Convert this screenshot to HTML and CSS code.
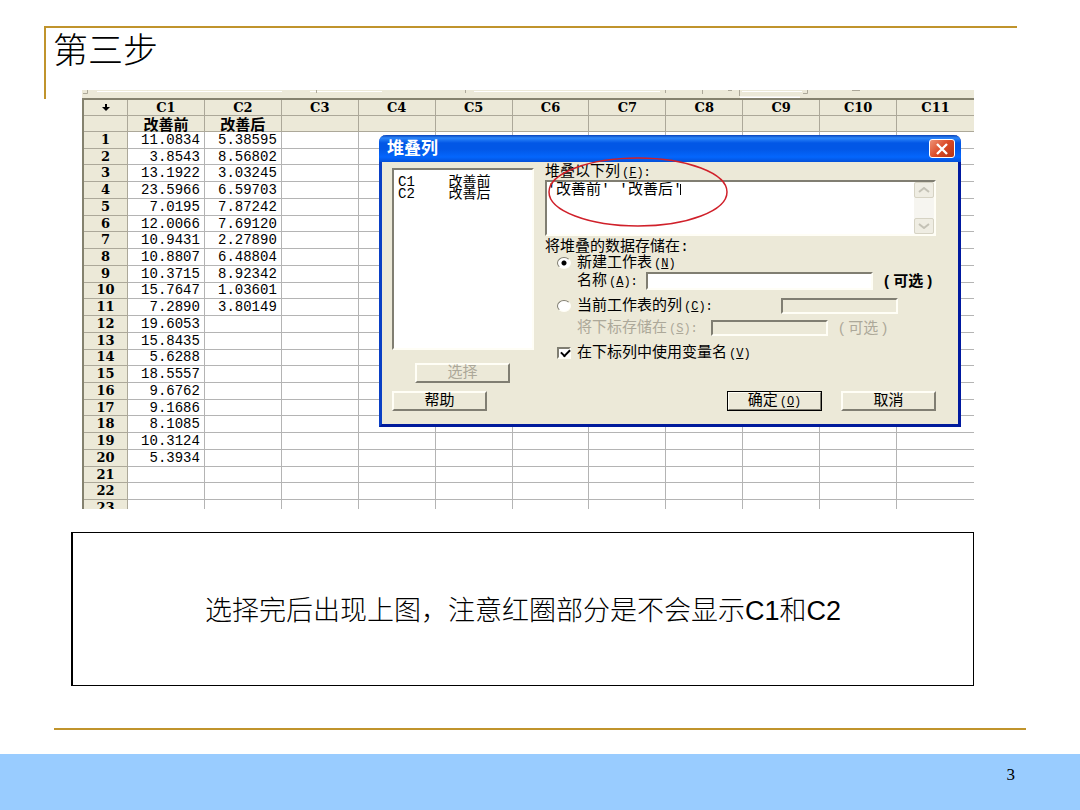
FILE: index.html
```html
<!DOCTYPE html>
<html lang="zh-CN">
<head>
  <meta charset="UTF-8" />
  <meta name="viewport" content="width=device-width, initial-scale=1.0" />
  <title>第三步</title>
  <link rel="stylesheet" href="styles.css">
</head>
<body>
  <div class="slide">
    <header class="slide-header">
      <h1>第三步</h1>
    </header>

    <main class="content">
      <section class="worksheet">
        <svg class="toolbar" viewBox="0 0 892 8" preserveAspectRatio="none" aria-hidden="true">
          <path d="M15 1.5H200M228 1.5H300M392 1.5H578M660 1.5H720" stroke="#fff" />
          <path d="M718 6.5H658V8H718Z" fill="#fff" />
          <path d="M5.500 0V3.500H1M234.500 0V3M383.500 0V3M583.500 0V3M620.500 0V4M657.500 0V6M725.500 0V3.500H721M646 .5h4M770 .5h8" fill="none" stroke="#aca899" />
        </svg>
        <table class="sheet">
          <thead>
            <tr><th class="gutter"><svg width="8" height="8" viewBox="0 0 8 8"><path d="M3 0h2v3h3L4 7 0 3h3z" /></svg></th><th>C1</th><th>C2</th><th>C3</th><th>C4</th><th>C5</th><th>C6</th><th>C7</th><th>C8</th><th>C9</th><th>C10</th><th>C11</th></tr>
            <tr class="names"><th></th><th>改善前</th><th>改善后</th><th></th><th></th><th></th><th></th><th></th><th></th><th></th><th></th><th></th></tr>
          </thead>
          <tbody id="rows"></tbody>
        </table>

        <form class="dialog">
          <div class="title-bar">
            <h2>堆叠列</h2>
            <button type="button" class="close" aria-label="关闭">
              <svg width="14" height="12" viewBox="0 0 14 12"><path d="M2 1L12 11M12 1L2 11" stroke="#fff" stroke-width="2.400" /></svg>
            </button>
          </div>
          <div class="dialog-body">
            <div class="source">
              <select class="inset list" size="12" aria-label="列">
                <option>C1&nbsp;&nbsp;&nbsp;&nbsp;改善前</option>
                <option>C2&nbsp;&nbsp;&nbsp;&nbsp;改善后</option>
              </select>
              <button type="button" class="btn select-btn" disabled>选择</button>
            </div>
            <div class="options">
              <label for="columns">堆叠以下列<kbd>(<u>F</u>):</kbd></label>
              <div class="inset columns">
                <textarea id="columns">'改善前' '改善后'</textarea>
                <span class="caret"></span>
                <div class="scrollbar">
                  <button type="button" aria-label="向上"><svg width="12" height="6" viewBox="0 0 12 6"><path d="M1 5L6 1L11 5" /></svg></button>
                  <button type="button" aria-label="向下"><svg width="12" height="6" viewBox="0 0 12 6"><path d="M1 1L6 5L11 1" /></svg></button>
                </div>
              </div>
              <p class="group">将堆叠的数据存储在:</p>
              <div class="row">
                <input type="radio" name="target" id="newSheet" checked>
                <label for="newSheet">新建工作表<kbd>(<u>N</u>)</kbd></label>
              </div>
              <div class="row sub name-row">
                <label for="sheetName">名称<kbd>(<u>A</u>):</kbd></label>
                <input type="text" class="inset" id="sheetName">
                <span class="hint">( 可选 )</span>
              </div>
              <div class="row column-row">
                <input type="radio" name="target" id="currentSheet">
                <label for="currentSheet">当前工作表的列<kbd>(<u>C</u>):</kbd></label>
                <input type="text" class="inset short" aria-label="当前工作表的列" disabled>
              </div>
              <div class="row sub subscript-row">
                <label for="subscripts">将下标存储在<kbd>(<u>S</u>):</kbd></label>
                <input type="text" class="inset short" id="subscripts" disabled>
                <span class="hint">( 可选 )</span>
              </div>
              <div class="row check-row">
                <input type="checkbox" id="useNames" checked>
                <label for="useNames">在下标列中使用变量名<kbd>(<u>V</u>)</kbd></label>
              </div>
            </div>
          </div>
          <div class="actions">
            <button type="button" class="btn help">帮助</button>
            <button type="button" class="btn default">确定<kbd>(<u>O</u>)</kbd></button>
            <button type="button" class="btn">取消</button>
          </div>
          <svg class="circle" width="182" height="74" viewBox="0 0 182 74" aria-hidden="true">
            <ellipse cx="91" cy="36" rx="89" ry="34" fill="none" stroke="#d0202a" stroke-width="1.500" />
          </svg>
        </form>
      </section>

      <p class="caption">选择完后出现上图，注意红圈部分是不会显示C1和C2</p>
    </main>

    <hr class="rule">
    <footer class="slide-footer">3</footer>
  </div>

  <script>
    const c1 = ["11.0834", "3.8543", "13.1922", "23.5966", "7.0195", "12.0066", "10.9431", "10.8807", "10.3715", "15.7647",
      "7.2890", "19.6053", "15.8435", "5.6288", "18.5557", "9.6762", "9.1686", "8.1085", "10.3124", "5.3934"];
    const c2 = ["5.38595", "8.56802", "3.03245", "6.59703", "7.87242", "7.69120", "2.27890", "6.48804", "8.92342", "1.03601", "3.80149"];
    const rows = document.getElementById("rows");

    for (let i = 0; i < 23; i++) {
      const tr = document.createElement("tr");
      tr.innerHTML = `<th>${i + 1}</th><td>${c1[i] || ""}</td><td>${c2[i] || ""}</td>` + "<td></td>".repeat(9);
      rows.appendChild(tr);
    }
  </script>
</body>
</html>
```

FILE: styles.css
```css
* {
  box-sizing: border-box;
  margin: 0;
  padding: 0;
}
body {
  background: #fff;
  color: #000;
  font-family: "Liberation Sans", "Noto Sans CJK SC", sans-serif;
}
.slide {
  display: flex;
  flex-direction: column;
  min-height: 100vh;
  padding-top: 26px;
}
.slide-header {
  height: 73px;
  margin: 0 63px 0 44px;
  padding-left: 7px;
  border: solid #c0942c;
  border-width: 2px 0 0 2px;
}
.slide-header h1 {
  font-size: 35px;
  font-weight: 300;
  line-height: 46px;
}
.content {
  margin: -9px 106px 0 71px;
}

/* worksheet */
.worksheet {
  position: relative;
  height: 419px;
  margin-left: 11px;
  overflow: hidden;
}
.toolbar {
  display: block;
  width: 100%;
  height: 8px;
  background: #ece9d8;
}
.sheet {
  width: 100%;
  height: 419px;
  table-layout: fixed;
  border-collapse: separate;
  border-spacing: 0;
  border-top: 2px solid #85826f;
  border-left: 2px solid #85826f;
}
.sheet th,
.sheet td {
  border-right: 1px solid #b4b4b4;
  border-bottom: 1px solid #b4b4b4;
  line-height: 12px;
}
.sheet th {
  background: #ece9d8;
  border-color: #aca899;
  font-family: "DejaVu Serif", "Noto Sans CJK SC", serif;
  font-size: 13px;
  font-weight: bold;
}
.sheet thead th {
  height: 16px;
}
.sheet .gutter {
  width: 44px;
}
.sheet .names th {
  padding-top: 2px;
  font-size: 15px;
}
.sheet td {
  padding-right: 4px;
  font-family: "Liberation Mono", monospace;
  font-size: 14px;
  text-align: right;
}
.sheet th:last-child,
.sheet td:last-child {
  border-right: none;
}

/* dialog */
.dialog {
  position: absolute;
  top: 45px;
  left: 297px;
  width: 582px;
  background: #ece9d8;
  border: 3px solid #0a3fc4;
  border-top: none;
  border-right-color: #0019a0;
  border-bottom-color: #001b9c;
  border-radius: 7px 7px 0 0;
  font-family: "Liberation Mono", "Noto Sans CJK SC", monospace;
  font-size: 15px;
  line-height: 14px;
}
.title-bar {
  display: flex;
  justify-content: space-between;
  align-items: center;
  height: 27px;
  margin: 0 -3px;
  padding: 0 6px 0 8px;
  background: linear-gradient(#0842b8, #2c86fa 3px, #0257e6 8px, #0257e6 14px, #0466fd 22px, #0450d8);
  border-radius: 7px 7px 0 0;
}
.title-bar h2 {
  padding-top: 2px;
  color: #fff;
  font-size: 17px;
  font-weight: bold;
}
.close {
  display: flex;
  justify-content: center;
  align-items: center;
  width: 26px;
  height: 19px;
  background: linear-gradient(135deg, #ee9378, #db4a26 50%, #b53414);
  border: 1px solid #fff;
  border-radius: 3px;
}
.dialog-body {
  display: flex;
  gap: 11px;
  padding: 4px 22px 0 10px;
}
.source {
  flex: 0 0 142px;
  padding-top: 2px;
}
.inset {
  background: #fff;
  border: 2px solid;
  border-color: #807e72 #fffef6 #fffef6 #807e72;
  border-radius: 0;
  outline: none;
}
.list {
  display: block;
  width: 100%;
  height: 182px;
  padding: 0 2px;
  overflow: hidden;
  font: 14px/12px "Liberation Mono", "Noto Sans CJK SC", monospace;
}
.list option {
  display: block;
  height: 12px;
  min-height: 0;
  padding: 0 2px;
  line-height: 10px;
}
.btn {
  width: 95px;
  height: 20px;
  padding-top: 2px;
  background: #ece9d8;
  border: 2px solid;
  border-color: #fffef6 #807e72 #807e72 #fffef6;
  font: inherit;
  color: #000;
}
.btn:disabled {
  color: #aca899;
}
.select-btn {
  display: block;
  margin: 13px 0 0 23px;
}
.options {
  flex: 1;
}
.options label {
  white-space: nowrap;
}
.options > label {
  display: block;
}
kbd {
  margin-left: 2px;
  font-family: "Liberation Mono", monospace;
  font-size: 12px;
  line-height: 0;
}
.columns {
  position: relative;
  display: flex;
  height: 56px;
}
.columns textarea {
  flex: 1;
  border: none;
  outline: none;
  resize: none;
  overflow: hidden;
  font: inherit;
  line-height: 18px;
  color: #000;
}
.caret {
  position: absolute;
  top: 2px;
  left: 133px;
  width: 1px;
  height: 11px;
  background: #000;
}
.scrollbar {
  display: flex;
  flex-direction: column;
  justify-content: space-between;
  width: 20px;
  background: #f6f5f0;
}
.scrollbar button {
  height: 16px;
  background: #efede3;
  border: 1px solid #d6d3c4;
  border-radius: 2px;
  line-height: 0;
}
.scrollbar path {
  fill: none;
  stroke: #c4c2b6;
  stroke-width: 2;
}
.group {
  margin-top: 5px;
}
.row {
  display: flex;
  align-items: center;
  padding-left: 12px;
}
.row label {
  padding-top: 2px;
}
.sub {
  padding-left: 32px;
}
.row input[type="text"] {
  min-width: 0;
  height: 16px;
}
.row input.short {
  width: 117px;
  background: #ece9d8;
}
.row input[type="radio"],
.row input[type="checkbox"] {
  appearance: none;
  width: 14px;
  height: 12px;
  margin-right: 6px;
  background: #fff;
  border: 2px solid;
  border-color: #807e72 #fffef6 #fffef6 #807e72;
}
.row input[type="radio"] {
  border-width: 1px;
  border-radius: 50%;
}
.row input[type="radio"]:checked {
  background: radial-gradient(circle, #000 2px, #fff 3px);
}
.row input[type="checkbox"] {
  position: relative;
}
.row input[type="checkbox"]:checked::after {
  content: "";
  position: absolute;
  top: 0;
  left: 2px;
  width: 7px;
  height: 4px;
  border: solid #000;
  border-width: 0 0 2px 2px;
  transform: rotate(-45deg);
}
.name-row {
  margin-top: 1px;
}
.name-row label {
  flex: 0 0 69px;
}
.name-row input[type="text"] {
  flex: 1;
  height: 18px;
}
.hint {
  flex: 0 0 52px;
  margin-left: 11px;
  font-family: "Liberation Sans", "Noto Sans CJK SC", sans-serif;
  font-size: 15px;
  white-space: nowrap;
}
.name-row .hint {
  font-weight: bold;
}
.column-row {
  margin-top: 8px;
  padding-right: 38px;
}
.column-row .short {
  margin-left: auto;
}
.subscript-row {
  margin-top: 6px;
  color: #aca899;
}
.subscript-row label {
  flex: 0 0 134px;
}
.check-row {
  margin-top: 9px;
}
.actions {
  display: flex;
  gap: 19px;
  padding: 8px 22px 13px 10px;
}
.help {
  margin-right: auto;
}
.default {
  outline: 1px solid #000;
  outline-offset: -1px;
}
.circle {
  position: absolute;
  top: 21px;
  left: 165px;
  pointer-events: none;
}

/* caption and footer */
.caption {
  display: flex;
  justify-content: center;
  align-items: center;
  height: 154px;
  margin-top: 23px;
  padding-bottom: 2px;
  border: 1px solid #000;
  border-left-width: 2px;
  font-size: 27px;
  font-weight: 300;
}
.rule {
  height: 2px;
  margin: 42px 54px 0;
  background: #c0942c;
  border: none;
}
.slide-footer {
  flex: 1;
  margin-top: 24px;
  padding: 11px 65px 0 0;
  background: #9cf;
  font: 17px/20px "Liberation Serif", serif;
  text-align: right;
}
```
